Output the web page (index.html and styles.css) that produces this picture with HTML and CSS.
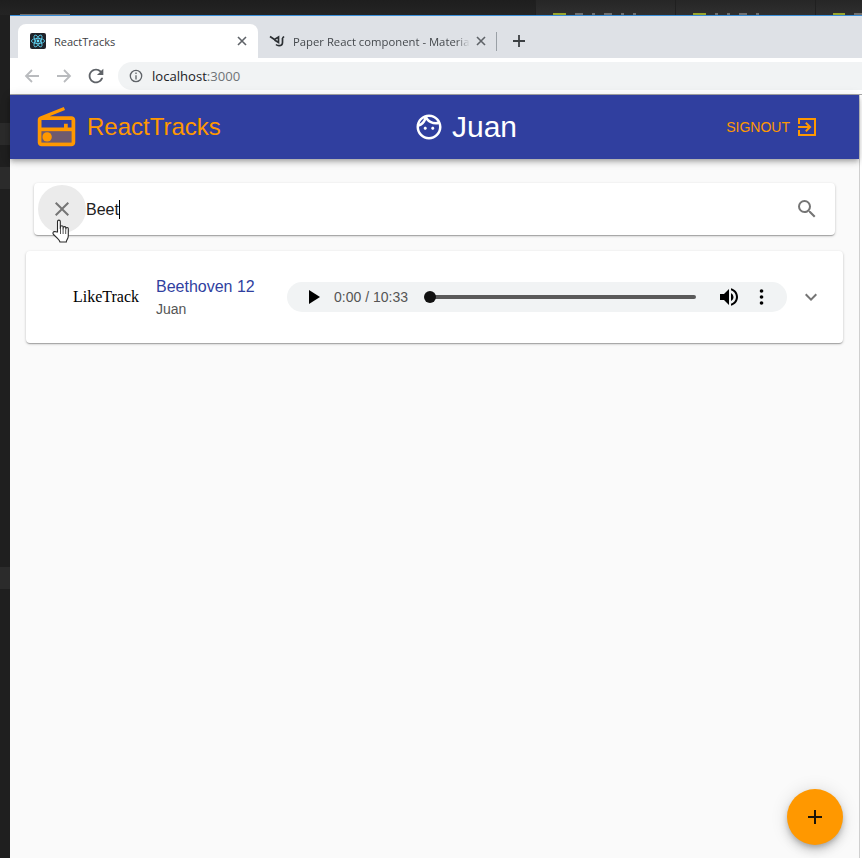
FILE: index.html
```html
<!DOCTYPE html>
<html lang="en">
<head>
    <meta charset="UTF-8">
    <title>ReactTracks</title>
    <link rel="stylesheet" href="styles.css">
</head>
<body>
<!-- editor tabs peeking out behind the browser window, only the bottom pixels show -->
<div class="editor-bar">
    <div class="editor-side"><i class="bit long"></i></div>
    <div class="editor-tab"><i class="bit js"></i><i class="bit mid"></i><i class="bit small"></i><i class="bit mid"></i><i class="bit small"></i><i class="bit small"></i></div>
    <div class="editor-tab"><i class="bit js"></i><i class="bit small"></i><i class="bit small"></i><i class="bit mid"></i><i class="bit small"></i></div>
    <div class="editor-tab last"><i class="bit js"></i><i class="bit mid"></i></div>
</div>
<div class="desktop">
    <div class="dock">
        <i class="dock-item one"></i>
        <i class="dock-item two"></i>
        <i class="dock-item three"></i>
    </div>
    <div class="browser">
        <div class="tabstrip">
            <div class="tab active">
                <svg class="favicon" viewBox="0 0 16 16">
                    <rect width="16" height="16" rx="2" fill="#20232a"/>
                    <g fill="none" stroke="#61dafb" stroke-width=".8">
                        <ellipse cx="8" cy="8" rx="6.6" ry="2.6"/>
                        <ellipse cx="8" cy="8" rx="6.6" ry="2.6" transform="rotate(60 8 8)"/>
                        <ellipse cx="8" cy="8" rx="6.6" ry="2.6" transform="rotate(120 8 8)"/>
                    </g>
                    <circle cx="8" cy="8" r="1.4" fill="#61dafb"/>
                </svg>
                <span class="tab-title">ReactTracks</span>
                <svg class="tab-close" viewBox="0 0 10 10"><path d="M1 1l8 8M9 1l-8 8"/></svg>
            </div>
            <div class="tab other">
                <svg class="favicon" viewBox="0 0 16 16" fill="none" stroke="#2b2f33" stroke-width="1.7">
                    <path d="M1 3.500L5.500 6.500 9.500 4v5.500L5.500 7M13.500 5v4.500c0 2-1.500 3.200-3.500 3.200-1.200 0-2.200-.4-3-1.200M15 3.500l-1.500 1.500"/>
                </svg>
                <span class="tab-title">Paper React component - Materia</span>
                <svg class="tab-close" viewBox="0 0 10 10"><path d="M1 1l8 8M9 1l-8 8"/></svg>
            </div>
            <i class="tab-sep"></i>
            <svg class="new-tab" viewBox="0 0 12 12"><path d="M6 0v12M0 6h12"/></svg>
        </div>
        <div class="toolbar">
            <svg class="nav off" viewBox="0 0 16 16"><path d="M15 8H2M8 2L2 8l6 6"/></svg>
            <svg class="nav off" viewBox="0 0 16 16"><path d="M1 8h13M8 2l6 6-6 6"/></svg>
            <svg class="nav reload" viewBox="0 0 24 24"><path d="M17.650 6.350A7.958 7.958 0 0 0 12 4c-4.420 0-7.990 3.580-7.990 8s3.570 8 7.990 8c3.730 0 6.840-2.550 7.730-6h-2.080A5.990 5.990 0 0 1 12 18c-3.310 0-6-2.690-6-6s2.690-6 6-6c1.660 0 3.140.690 4.220 1.780L13 11h7V4l-2.350 2.350z"/></svg>
            <div class="omnibox">
                <svg class="info" viewBox="0 0 16 16">
                    <circle cx="8" cy="8" r="6.500"/>
                    <path d="M8 7v5M8 4v1.800"/>
                </svg>
                <span class="url">localhost<span class="port">:3000</span></span>
            </div>
        </div>
        <div class="page">
            <div id="app">
                <header class="header">
                    <div class="brand">
                        <svg class="radio" viewBox="0 0 24 24">
                            <path d="M4 14h16v6H4z" fill-opacity=".3"/>
                            <path fill-rule="evenodd" d="M3.240 6.150C2.510 6.430 2 7.170 2 8v12c0 1.100.89 2 2 2h16c1.110 0 2-.9 2-2V8c0-1.110-.89-2-2-2H8.300l8.260-3.340L15.880 1 3.240 6.150zM4 8h16v4h-2v-2h-2v2H4zM4 14h16v6H4z"/>
                            <circle cx="7" cy="17" r="2.500"/>
                        </svg>
                        <span class="brand-name">ReactTracks</span>
                    </div>
                    <div class="user">
                        <svg class="face" viewBox="0 0 24 24"><path d="M10.250 13c0 .69-.56 1.250-1.250 1.250S7.750 13.690 7.750 13s.56-1.250 1.250-1.250 1.250.56 1.250 1.250zM15 11.750c-.69 0-1.250.56-1.250 1.250s.56 1.250 1.250 1.250 1.250-.56 1.250-1.250-.56-1.250-1.250-1.250zm7 .25c0 5.520-4.480 10-10 10S2 17.520 2 12 6.480 2 12 2s10 4.480 10 10zM10.660 4.120C12.060 6.440 14.600 8 17.500 8c.46 0 .91-.05 1.340-.12C17.440 5.560 14.900 4 12 4c-.46 0-.91.05-1.340.12zM4.420 9.470c1.710-.97 3.030-2.550 3.660-4.440C6.370 6 5.050 7.580 4.420 9.470zM20 12c0-.78-.12-1.530-.33-2.240-.7.15-1.430.24-2.170.24-3.130 0-5.920-1.440-7.760-3.690C8.690 8.870 6.600 10.880 4 11.860c.01.04 0 .09 0 .14 0 4.410 3.590 8 8 8s8-3.590 8-8z"/></svg>
                        <span class="user-name">Juan</span>
                    </div>
                    <div class="signout">
                        <span>SIGNOUT</span>
                        <svg class="exit" viewBox="0 0 24 24"><path d="M10.090 15.590L11.500 17l5-5-5-5-1.410 1.410L12.670 11H3v2h9.670l-2.580 2.590zM3 3h18v18H3v-6h2v4h14V5H5v4H3V3z"/></svg>
                    </div>
                </header>
                <main class="content">
                    <div class="search">
                        <span class="clear-btn">
                            <svg viewBox="0 0 24 24"><path d="M19 6.410L17.590 5 12 10.590 6.410 5 5 6.410 10.590 12 5 17.590 6.410 19 12 13.410 17.590 19 19 17.590 13.410 12z"/></svg>
                        </span>
                        <span class="search-text">Beet<i class="caret"></i></span>
                        <svg class="search-icon" viewBox="0 0 24 24"><path d="M15.500 14h-.79l-.28-.27A6.471 6.471 0 0 0 16 9.500 6.500 6.500 0 1 0 9.500 16c1.610 0 3.090-.59 4.230-1.570l.27.28v.79l5 4.990L20.490 19l-4.990-5zm-6 0C7.010 14 5 11.990 5 9.500S7.010 5 9.500 5 14 7.010 14 9.500 11.990 14 9.500 14z"/></svg>
                    </div>
                    <div class="track">
                        <span class="like">LikeTrack</span>
                        <div class="track-info">
                            <div class="track-title">Beethoven 12</div>
                            <div class="track-user">Juan</div>
                        </div>
                        <div class="audio">
                            <svg class="play" viewBox="0 0 11 14"><path d="M0 0l11 7-11 7z"/></svg>
                            <span class="time">0:00 / 10:33</span>
                            <div class="seek"><i class="thumb"></i></div>
                            <svg class="volume" viewBox="0 0 24 24"><path d="M3 9v6h4l5 5V4L7 9H3zm13.500 3A4.500 4.500 0 0 0 14 7.970v8.050c1.480-.73 2.500-2.250 2.500-4.020zM14 3.230v2.060c2.890.86 5 3.540 5 6.710s-2.110 5.850-5 6.710v2.060c4.010-.91 7-4.490 7-8.770s-2.990-7.860-7-8.770z"/></svg>
                            <svg class="more" viewBox="0 0 4 16"><circle cx="2" cy="2" r="1.800"/><circle cx="2" cy="8" r="1.800"/><circle cx="2" cy="14" r="1.800"/></svg>
                        </div>
                        <svg class="chevron" viewBox="0 0 24 24"><path d="M16.590 8.590L12 13.170 7.410 8.590 6 10l6 6 6-6z"/></svg>
                    </div>
                </main>
                <span class="fab"><svg viewBox="0 0 24 24"><path d="M19 13h-6v6h-2v-6H5v-2h6V5h2v6h6v2z"/></svg></span>
                <svg class="hand" viewBox="0 0 18 24">
                    <path d="M5 13V2.500a1.400 1.400 0 0 1 2.800 0V10l.2-2a1.300 1.300 0 0 1 2.600 0v2.200l.1-1.400a1.300 1.300 0 0 1 2.600.2v1.400l.1-.8a1.200 1.200 0 0 1 2.400.2V17c0 2-.7 3-1.500 4.200-.4.700-.5 1.300-.5 1.800H7.500c-.4-1.500-1.300-2.500-2.500-3.700L1 15.500c-.9-1-.6-2.200.2-2.700.9-.5 2.500.2 3.800.2z"/>
                    <path class="hand-line" d="M8 10v5M10.600 10v5M13.200 10.500V15"/>
                </svg>
            </div>
            <div class="scroll-edge"></div>
        </div>
    </div>
</div>
</body>
</html>
```

FILE: styles.css
```css
*{
    margin: 0;
    padding: 0;
    box-sizing: border-box;
}
html,body{
    height: 858px;
    overflow: hidden;
}
body{
    background-color: #1e1e1e;
    font-family: "Liberation Sans", Arial, sans-serif;
}
svg{
    display: block;
    flex: none;
}

/* editor behind the window */
.editor-bar{
    display: flex;
    height: 15px;
    background: linear-gradient(#1e1e1e, #242424);
}
.editor-side{
    flex: none;
    display: flex;
    align-items: flex-end;
    width: 535px;
    padding-left: 20px;
}
.editor-tab{
    flex: none;
    display: flex;
    align-items: flex-end;
    gap: 9px;
    width: 140px;
    padding-left: 17px;
    background: linear-gradient(#262626, #2f2f2f);
    border-left: 1px solid #202020;
}
.editor-tab.last{
    flex: 1;
    width: auto;
    min-width: 0;
}
.bit{
    display: block;
    height: 2px;
    background-color: #6f6f6f;
}
.bit.long{
    width: 50px;
    height: 1px;
}
.bit.js{
    width: 13px;
    background-color: #98a52b;
}
.bit.mid{
    width: 8px;
}
.bit.small{
    width: 3px;
}
.desktop{
    display: flex;
    height: 843px;
}
.dock{
    width: 10px;
    flex: none;
    padding-top: 108px;
    background-color: #1f1f1f;
}
.dock-item{
    display: block;
    height: 22px;
    background-color: #2b2b2b;
}
.dock-item.two{
    margin-top: 22px;
}
.dock-item.three{
    margin-top: 378px;
}

/* browser chrome */
.browser{
    flex: 1;
    min-width: 0;
    display: flex;
    flex-direction: column;
    border-top: 1px solid #3b8fd9;
    background-color: #fff;
}
.tabstrip{
    display: flex;
    align-items: flex-end;
    height: 42px;
    padding-left: 8px;
    background-color: #dee1e6;
    font-family: "Open Sans", sans-serif;
    font-size: 11px;
}
.tab{
    display: flex;
    align-items: center;
    height: 34px;
    color: #3c4043;
}
.tab.active{
    width: 240px;
    padding: 0 11px 0 12px;
    background-color: #fff;
    border-radius: 8px 8px 0 0;
}
.tab.other{
    width: 238px;
    padding: 0 10px 0 11px;
    color: #45494d;
    font-size: 11.3px;
}
.favicon{
    width: 16px;
    height: 16px;
}
.tab-title{
    flex: 1;
    min-width: 0;
    margin-left: 8px;
    margin-right: 6px;
    white-space: nowrap;
}
.other .tab-title{
    -webkit-mask-image: linear-gradient(to left, transparent, #000 14px);
    mask-image: linear-gradient(to left, transparent, #000 14px);
}
.tab-close{
    width: 10px;
    height: 10px;
    fill: none;
    stroke: #5f6368;
    stroke-width: 1.6;
}
.tab-sep{
    width: 1px;
    height: 19px;
    margin-bottom: 7px;
    background-color: #9aa0a6;
}
.new-tab{
    width: 12px;
    height: 12px;
    margin: 0 0 11px 16px;
    fill: none;
    stroke: #3c4043;
    stroke-width: 1.8;
}
.toolbar{
    display: flex;
    align-items: center;
    height: 37px;
    padding: 0 0 1px 14px;
    background-color: #fff;
    border-bottom: 1px solid #a6a6a6;
}
.nav{
    width: 16px;
    height: 16px;
    margin-right: 16px;
    fill: none;
    stroke-width: 1.8;
}
.nav.off{
    stroke: #b9bbbe;
}
.nav.reload{
    width: 22px;
    height: 22px;
    margin: 0 11px 0 -3px;
    fill: #5f6368;
}
.omnibox{
    flex: 1;
    display: flex;
    align-items: center;
    height: 28px;
    padding-left: 11px;
    background-color: #f1f3f4;
    border-radius: 14px 0 0 14px;
}
.info{
    width: 14px;
    height: 14px;
    fill: none;
    stroke: #5f6368;
    stroke-width: 1.500;
}
.url{
    margin-left: 9px;
    font-family: "Open Sans", sans-serif;
    font-size: 13.1px;
    color: #202124;
}
.port{
    color: #6f7377;
}

/* the app */
.page{
    flex: 1;
    display: flex;
    min-height: 0;
}
#app{
    flex: 1;
    position: relative;
    background-color: #fafafa;
}
.scroll-edge{
    width: 3px;
    background-color: #fff;
    border-left: 1px solid #cfcfcf;
}
.header{
    position: relative;
    display: grid;
    grid-template-columns: 380px auto 1fr;
    align-items: center;
    height: 64px;
    padding: 0 41px 0 24px;
    background-color: #303f9f;
    box-shadow: 0 2px 4px -1px rgba(0,0,0,.2), 0 4px 5px 0 rgba(0,0,0,.14), 0 1px 10px 0 rgba(0,0,0,.12);
}
.brand{
    display: flex;
    align-items: center;
}
.radio{
    width: 45px;
    height: 45px;
    fill: #ff9800;
}
.brand-name{
    margin-left: 8px;
    font-size: 24px;
    color: #ff9800;
}
.user{
    display: flex;
    align-items: center;
    color: #fff;
}
.face{
    width: 30px;
    height: 30px;
    margin-right: 8px;
    fill: #fff;
}
.user-name{
    font-size: 30px;
}
.signout{
    display: flex;
    align-items: center;
    justify-content: flex-end;
    font-size: 14px;
    color: #ff9800;
}
.exit{
    width: 24px;
    height: 24px;
    margin: 0 -1px 0 5px;
    fill: #ff9800;
}
.content{
    padding: 24px 16px 0;
}
.search{
    display: flex;
    align-items: center;
    height: 52px;
    margin: 0 8px 16px;
    padding: 0 16px 0 4px;
    background-color: #fff;
    border-radius: 4px;
    box-shadow: 0 1px 3px 0 rgba(0,0,0,.2), 0 1px 1px 0 rgba(0,0,0,.14), 0 2px 1px -1px rgba(0,0,0,.12);
}
.clear-btn{
    display: flex;
    align-items: center;
    justify-content: center;
    width: 48px;
    height: 48px;
    border-radius: 50%;
    background-color: #ebebeb;
}
.clear-btn svg{
    width: 24px;
    height: 24px;
    fill: #757575;
}
.search-text{
    flex: 1;
    font-size: 16px;
    color: #212121;
}
.caret{
    display: inline-block;
    width: 1px;
    height: 19px;
    vertical-align: -4px;
    background-color: #000;
}
.search-icon{
    width: 24px;
    height: 24px;
    fill: #757575;
}
.track{
    display: flex;
    align-items: center;
    height: 92px;
    padding-left: 47px;
    background-color: #fff;
    border-radius: 4px;
    box-shadow: 0 1px 3px 0 rgba(0,0,0,.2), 0 1px 1px 0 rgba(0,0,0,.14), 0 2px 1px -1px rgba(0,0,0,.12);
}
.like{
    width: 83px;
    font-family: "Liberation Serif", serif;
    font-size: 16px;
    color: #000;
}
.track-info{
    width: 131px;
}
.track-title{
    font-size: 16px;
    line-height: 24px;
    color: #303f9f;
}
.track-user{
    font-size: 14px;
    line-height: 20px;
    color: #555;
}
.audio{
    display: flex;
    align-items: center;
    width: 500px;
    height: 30px;
    padding-left: 22px;
    background-color: #f1f3f4;
    border-radius: 15px;
}
.play{
    width: 11px;
    height: 14px;
}
.time{
    margin-left: 14px;
    width: 90px;
    font-size: 14px;
    color: #555;
}
.seek{
    position: relative;
    width: 266px;
    height: 4px;
    margin-left: 6px;
    background-color: #5a5a5a;
    border-radius: 2px;
}
.thumb{
    position: absolute;
    left: -6px;
    top: -4px;
    width: 12px;
    height: 12px;
    border-radius: 50%;
    background-color: #111;
}
.volume{
    width: 24px;
    height: 24px;
    margin-left: 21px;
}
.more{
    width: 5px;
    height: 16px;
    margin-left: 18px;
}
.chevron{
    width: 24px;
    height: 24px;
    margin-left: 12px;
    fill: #757575;
}
.fab{
    position: absolute;
    right: 16px;
    bottom: 13px;
    display: flex;
    align-items: center;
    justify-content: center;
    width: 56px;
    height: 56px;
    border-radius: 50%;
    background-color: #ff9800;
    box-shadow: 0 3px 5px -1px rgba(0,0,0,.2), 0 6px 10px 0 rgba(0,0,0,.14), 0 1px 18px 0 rgba(0,0,0,.12);
}
.fab svg{
    width: 24px;
    height: 24px;
    fill: #1b1408;
}
.hand{
    position: absolute;
    left: 42px;
    top: 124px;
    width: 19px;
    height: 24px;
    fill: #fff;
    stroke: #2a2a2a;
    stroke-width: 1.100;
}
.hand-line{
    fill: none;
    stroke-width: .8;
}
```
